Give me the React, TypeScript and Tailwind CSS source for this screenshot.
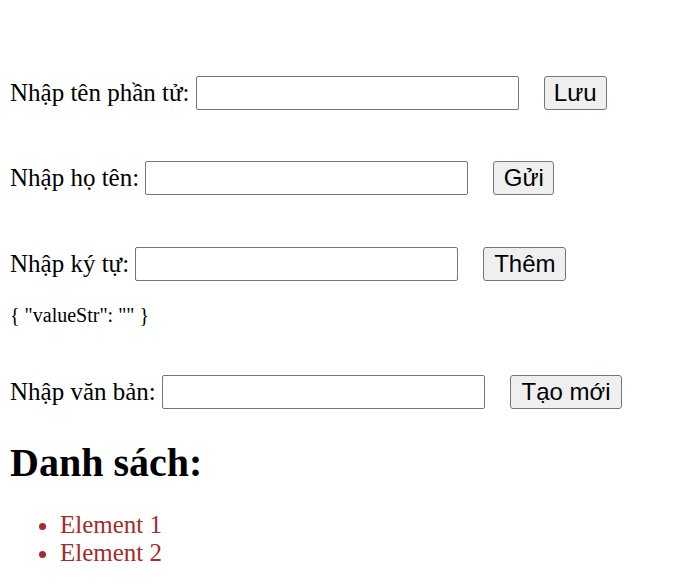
import React, { useState } from "react";

const rows = [
  { label: "Nhập tên phần tử:", button: "Lưu", bw: "w-[63px]" },
  { label: "Nhập họ tên:", button: "Gửi", bw: "w-[61px]" },
  { label: "Nhập ký tự:", button: "Thêm", bw: "w-[83px]" },
];

function Row({ label, button, bw, value, onChange }: { label: string; button: string; bw: string; value?: string; onChange?: (v: string) => void }) {
  return (
    <div className="flex items-center h-[34px]">
      <span>{label}&nbsp;</span>
      <input
        value={value}
        onChange={(e) => onChange && onChange(e.target.value)}
        className="w-[323px] h-[34px] border border-[#767676] rounded-[2px] bg-white px-[2px] text-[24px] outline-none"
      />
      <button className={`${bw} ml-[25px] h-[34px] border border-[#767676] rounded-[3px] bg-[#efefef] text-black text-[24px] leading-none font-['Liberation_Sans',Arial,sans-serif]`}>
        {button}
      </button>
    </div>
  );
}

export default function App() {
  const [valueStr, setValueStr] = useState("");
  const items = ["Element 1", "Element 2"];

  return (
    <div className="w-[694px] h-[584px] bg-white text-black pl-[10px] pt-[76px] text-[25px] font-['Liberation_Serif','Times_New_Roman',serif]">
      <Row {...rows[0]} />
      <div className="mt-[51px]">
        <Row {...rows[1]} />
      </div>
      <div className="mt-[52px]">
        <Row {...rows[2]} value={valueStr} onChange={setValueStr} />
      </div>
      <div className="mt-[23px] text-[20px] leading-[23px]">{JSON.stringify({ valueStr }).replace("{", "{ ").replace("}", " }").replace(":", ": ")}</div>

      <div className="mt-[48px]">
        <Row label="Nhập văn bản:" button="Tạo mới" bw="w-[112px]" />
      </div>

      <h2 className="mt-[31px] text-[40px] leading-[46px] font-bold">Danh sách:</h2>

      <ul className="mt-[25px] list-disc pl-[50px] leading-[28px] text-[#a52a2a]">
        {items.map((item) => (
          <li key={item}>{item}</li>
        ))}
      </ul>
    </div>
  );
}
